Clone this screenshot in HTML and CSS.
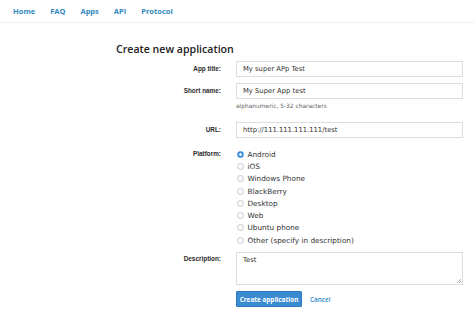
FILE: index.html
```html
<!DOCTYPE html>
<html>
<head>
<meta charset="utf-8">
<link rel="stylesheet" href="styles.css">
</head>
<body>
<nav class="topnav">
  <a href="#">Home</a>
  <a href="#">FAQ</a>
  <a href="#">Apps</a>
  <a href="#">API</a>
  <a href="#">Protocol</a>
</nav>
<main class="page">
  <h1 class="title">Create new application</h1>
  <form class="form">
    <div class="row row-title">
      <label class="lbl">App title:</label>
      <div class="field"><input class="inp" type="text" value="My super APp Test"></div>
    </div>
    <div class="row row-short">
      <label class="lbl">Short name:</label>
      <div class="field">
        <input class="inp" type="text" value="My Super App test">
        <div class="hint">alphanumeric, 5-32 characters</div>
      </div>
    </div>
    <div class="row row-url">
      <label class="lbl">URL:</label>
      <div class="field"><input class="inp" type="text" value="http://111.111.111.111/test"></div>
    </div>
    <div class="row row-platform">
      <label class="lbl lbl-radio">Platform:</label>
      <div class="field radios">
        <label class="radio"><span class="dot on"></span>Android</label>
        <label class="radio"><span class="dot"></span>iOS</label>
        <label class="radio"><span class="dot"></span>Windows Phone</label>
        <label class="radio"><span class="dot"></span>BlackBerry</label>
        <label class="radio"><span class="dot"></span>Desktop</label>
        <label class="radio"><span class="dot"></span>Web</label>
        <label class="radio"><span class="dot"></span>Ubuntu phone</label>
        <label class="radio"><span class="dot"></span>Other (specify in description)</label>
      </div>
    </div>
    <div class="row row-desc">
      <label class="lbl lbl-desc">Description:</label>
      <div class="field"><div class="ta">Test<span class="grip"></span></div></div>
    </div>
    <div class="row row-actions">
      <span></span>
      <div class="field actions">
        <button class="btn" type="button">Create application</button>
        <a class="cancel" href="#">Cancel</a>
      </div>
    </div>
  </form>
</main>
</body>
</html>
```

FILE: styles.css
```css
html, body {
  margin: 0;
  padding: 0;
  background: #fff;
  font-family: "DejaVu Sans", Verdana, sans-serif;
  color: #333;
}
.topnav {
  height: 22px;
  border-bottom: 1px solid #efefef;
  display: flex;
  align-items: center;
  padding-left: 13px;
}
.topnav a {
  font-family: "Open Sans", sans-serif;
  font-size: 7.5px;
  font-weight: 700;
  color: #3288c2;
  text-decoration: none;
  margin-right: 15px;
}
.page {
  margin-left: 116px;
  width: 347px;
}
.title {
  margin: 0;
  padding-top: 18px;
  height: 16px;
  font-size: 10.6px;
  font-weight: 600;
  line-height: 16px;
  color: #222;
  font-family: "Open Sans", sans-serif;
}
.form {
  margin-top: 4px;
  display: flex;
  flex-direction: column;
}
.row {
  display: grid;
  grid-template-columns: 105px 227px;
  column-gap: 15px;
  align-items: start;
}
.lbl {
  display: block;
  text-align: right;
  font-family: "Liberation Sans", Arial, sans-serif;
  font-size: 6.4px;
  font-weight: bold;
  color: #2a2a2a;
  height: 16px;
  line-height: 16px;
}
.row-title { margin-bottom: 6px; }
.row-short { margin-bottom: 6px; }
.row-url { margin-top: 6px; margin-bottom: 10px; }
.row-platform { margin-bottom: 6px; }
.row-desc { margin-bottom: 6px; }
.inp {
  display: block;
  box-sizing: border-box;
  width: 227px;
  height: 16px;
  margin: 0;
  border: 1px solid #dddddd;
  border-radius: 0;
  padding: 0 6px;
  font-family: "DejaVu Sans", sans-serif;
  font-size: 6.8px;
  color: #333;
  background: #fff;
  outline: none;
}
.hint {
  font-size: 5.9px;
  color: #666;
  height: 8px;
  line-height: 8px;
  margin-top: 3px;
}
.lbl-radio { height: 12.3px; line-height: 12.3px; }
.lbl-desc { height: 14px; line-height: 14px; }
.radios { display: flex; flex-direction: column; }
.radio {
  display: flex;
  align-items: center;
  height: 12.3px;
  font-size: 7.3px;
  color: #333;
}
.dot {
  box-sizing: border-box;
  width: 7px;
  height: 7px;
  border: 1px solid #c9c9c9;
  border-radius: 50%;
  margin-right: 4px;
  margin-left: 0.5px;
  background: #fbfbfb;
  flex: none;
}
.dot.on {
  border-color: #3b8edb;
  background: radial-gradient(circle, #fff 0 1.1px, #3b8edb 1.5px);
}
.ta {
  position: relative;
  box-sizing: border-box;
  width: 227px;
  height: 33px;
  border: 1px solid #dddddd;
  padding: 3px 6px;
  font-size: 6.8px;
  line-height: 8px;
  color: #333;
}
.grip {
  position: absolute;
  right: 1px;
  bottom: 1px;
  width: 4px;
  height: 4px;
  background: linear-gradient(135deg, transparent 45%, #aaa 45% 55%, transparent 55% 70%, #aaa 70% 80%, transparent 80%);
}
.actions { display: flex; align-items: center; }
.btn {
  box-sizing: border-box;
  height: 16px;
  width: 66px;
  margin: 0;
  padding: 0;
  border: 1px solid #2f7bbf;
  background: #3a8bd1;
  color: #fff;
  font-family: "Open Sans", sans-serif;
  font-size: 6.4px;
  font-weight: 700;
  border-radius: 1px;
}
.cancel {
  margin-left: 8px;
  font-family: "Open Sans", sans-serif;
  font-size: 6.4px;
  font-weight: 600;
  color: #2a86c3;
  text-decoration: none;
}
```
